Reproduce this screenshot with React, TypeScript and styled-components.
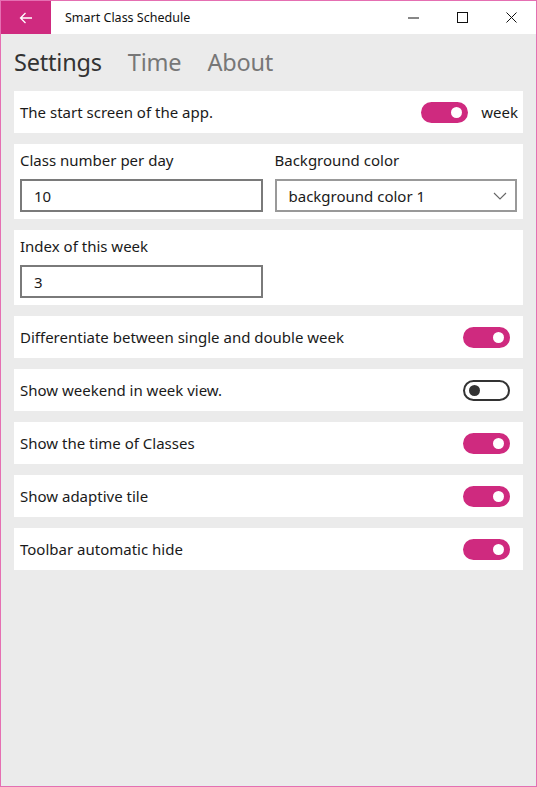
import React from "react"
import styled, { createGlobalStyle } from "styled-components"

const PINK = "#cf2a7f"
const FONT = `"Noto Sans", "Open Sans", sans-serif`

const GlobalStyle = createGlobalStyle`
  html, body {
    margin: 0;
    padding: 0;
    background: #ebebeb;
  }
  * {
    box-sizing: border-box;
  }
`

const Window = styled.div`
  width: 537px;
  height: 787px;
  border: 1px solid #e56fb2;
  background: #ebebeb;
  font-family: ${FONT};
  color: #1a1a1a;
  display: flex;
  flex-direction: column;
  overflow: hidden;
`

const TitleBar = styled.div`
  height: 33px;
  background: #fff;
  display: flex;
  align-items: center;
  flex-shrink: 0;
`

const BackButton = styled.div`
  width: 50px;
  height: 100%;
  background: ${PINK};
  display: flex;
  align-items: center;
  justify-content: center;
`

const Title = styled.div`
  flex: 1;
  padding-left: 14px;
  font-size: 12.5px;
  color: #111;
`

const CaptionButton = styled.div`
  width: 49px;
  height: 100%;
  display: flex;
  align-items: center;
  justify-content: center;
`

const Content = styled.div`
  flex: 1;
  padding: 0 13px;
  display: flex;
  flex-direction: column;
  gap: 11px;
`

const Tabs = styled.div`
  height: 46px;
  display: flex;
  align-items: center;
  gap: 26px;
  padding-top: 9px;
`

const Tab = styled.div<{ $active?: boolean }>`
  font-size: 23.5px;
  color: ${(p) => (p.$active ? "#333" : "#777")};
  letter-spacing: -0.2px;
`

const Card = styled.div`
  background: #fff;
  min-height: 42px;
  padding: 0 13px 0 6px;
  display: flex;
  align-items: center;
  justify-content: space-between;
`

const FieldCard = styled.div`
  background: #fff;
  padding: 6px 6px 7px 6px;
  display: grid;
  grid-template-columns: repeat(2, 1fr);
  column-gap: 12px;
`

const Field = styled.div`
  display: flex;
  flex-direction: column;
  gap: 9px;
`

const Label = styled.div`
  font-size: 15px;
  line-height: 20px;
  color: #1a1a1a;
`

const TextBox = styled.div`
  height: 33px;
  border: 2px solid #7a7a7a;
  padding: 0 12px;
  display: flex;
  align-items: center;
  font-size: 15px;
`

const Select = styled(TextBox)`
  border-color: #999;
  justify-content: space-between;
  padding-right: 8px;
`

const RightGroup = styled.div`
  display: flex;
  align-items: center;
  gap: 13px;
  margin-right: -8px;
`

const ToggleTrack = styled.div<{ $on: boolean }>`
  width: 47px;
  height: 21px;
  border-radius: 11px;
  background: ${(p) => (p.$on ? PINK : "#fff")};
  border: 2px solid ${(p) => (p.$on ? PINK : "#333")};
  display: flex;
  align-items: center;
  justify-content: ${(p) => (p.$on ? "flex-end" : "flex-start")};
  padding: 0 4px;
`

const Knob = styled.div<{ $on: boolean }>`
  width: 11px;
  height: 11px;
  border-radius: 50%;
  background: ${(p) => (p.$on ? "#fff" : "#333")};
`

const Toggle = ({ on }: { on: boolean }) => (
  <ToggleTrack $on={on}>
    <Knob $on={on} />
  </ToggleTrack>
)

const switches = [
  { label: "Differentiate between single and double week", on: true },
  { label: "Show weekend in week view.", on: false },
  { label: "Show the time of Classes", on: true },
  { label: "Show adaptive tile", on: true },
  { label: "Toolbar automatic hide", on: true }
]

const App = () => {
  return (
    <>
      <GlobalStyle />
      <Window>
        <TitleBar>
          <BackButton>
            <svg width="14" height="12" viewBox="0 0 14 12">
              <path
                d="M13 6H1.5M6.5 1L1.5 6l5 5"
                stroke="#fff"
                strokeWidth="1.3"
                fill="none"
              />
            </svg>
          </BackButton>
          <Title>Smart Class Schedule</Title>
          <CaptionButton>
            <svg width="11" height="11" viewBox="0 0 11 11">
              <path d="M0 6h11" stroke="#111" strokeWidth="1" />
            </svg>
          </CaptionButton>
          <CaptionButton>
            <svg width="11" height="11" viewBox="0 0 11 11">
              <rect
                x="0.5"
                y="0.5"
                width="10"
                height="10"
                stroke="#111"
                fill="none"
              />
            </svg>
          </CaptionButton>
          <CaptionButton>
            <svg width="11" height="11" viewBox="0 0 11 11">
              <path d="M0.5 0.5l10 10M10.5 0.5l-10 10" stroke="#111" />
            </svg>
          </CaptionButton>
        </TitleBar>

        <Content>
          <Tabs>
            <Tab $active>Settings</Tab>
            <Tab>Time</Tab>
            <Tab>About</Tab>
          </Tabs>

          <Card>
            <Label>The start screen of the app.</Label>
            <RightGroup>
              <Toggle on />
              <Label>week</Label>
            </RightGroup>
          </Card>

          <FieldCard>
            <Field>
              <Label>Class number per day</Label>
              <TextBox>10</TextBox>
            </Field>
            <Field>
              <Label>Background color</Label>
              <Select>
                background color 1
                <svg width="14" height="8" viewBox="0 0 14 8">
                  <path
                    d="M1 1l6 6 6-6"
                    stroke="#666"
                    strokeWidth="1.1"
                    fill="none"
                  />
                </svg>
              </Select>
            </Field>
          </FieldCard>

          <FieldCard>
            <Field>
              <Label>Index of this week</Label>
              <TextBox>3</TextBox>
            </Field>
          </FieldCard>

          {switches.map((s) => (
            <Card key={s.label}>
              <Label>{s.label}</Label>
              <Toggle on={s.on} />
            </Card>
          ))}
        </Content>
      </Window>
    </>
  )
}

export default App
